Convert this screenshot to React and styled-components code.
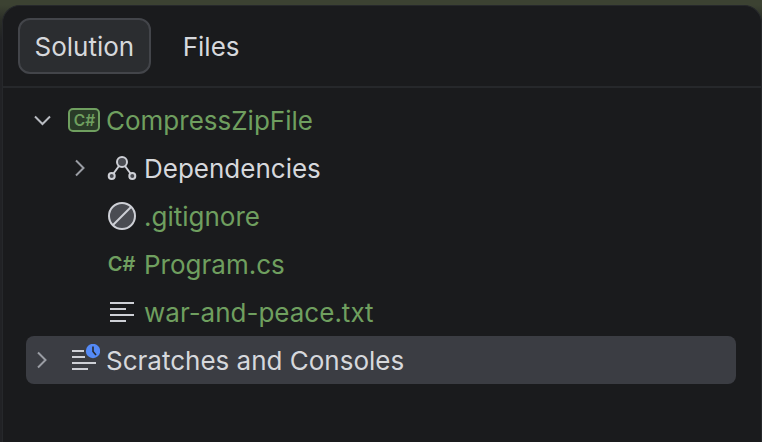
import React from "react";
import styled, { createGlobalStyle } from "styled-components";

const Global = createGlobalStyle`
  html, body { margin: 0; padding: 0; }
  body {
    width: 762px;
    height: 442px;
    overflow: hidden;
    font-family: Inter, "Liberation Sans", sans-serif;
    background: linear-gradient(#3c4232 0, #3c4232 5px, #2b2e28 20px, #212225 40px);
  }
`;

const Window = styled.div`
  box-sizing: border-box;
  width: 760px;
  height: 437px;
  margin: 5px 0 0 2px;
  background: #1a1b1d;
  border: 1px solid #26282b;
  border-bottom: none;
  border-radius: 18px 18px 0 0;
  display: flex;
  flex-direction: column;
`;

const TabBar = styled.div`
  display: flex;
  align-items: center;
  gap: 2px;
  height: 82px;
  box-sizing: border-box;
  padding: 12px 0 12px 15px;
  border-bottom: 2px solid #26282b;
`;

const Tab = styled.div`
  box-sizing: border-box;
  height: 56px;
  padding: 0 ${(p) => (p.$active ? "14.5px" : "28px")};
  display: flex;
  align-items: center;
  font-size: 26px;
  color: #d6d8dc;
  border-radius: 12px;
  background: ${(p) => (p.$active ? "#2b2d30" : "transparent")};
  border: 2px solid ${(p) => (p.$active ? "#43454a" : "transparent")};
`;

const Tree = styled.div`
  display: flex;
  flex-direction: column;
  padding: 8px 25px 0 23px;
`;

const Row = styled.div`
  height: 48px;
  display: flex;
  align-items: center;
  border-radius: 8px;
  padding-left: ${(p) => p.$indent}px;
  background: ${(p) => (p.$selected ? "#3b3d43" : "transparent")};
`;

const Arrow = styled.span`
  width: 32px;
  height: 28px;
  display: flex;
  align-items: center;
  justify-content: center;
  flex: none;
  margin-right: 10px;
`;

const IconBox = styled.span`
  width: 32px;
  height: 32px;
  display: flex;
  align-items: center;
  justify-content: center;
  flex: none;
  margin-right: 6px;
`;

const Label = styled.span`
  font-size: 26px;
  white-space: nowrap;
  color: ${(p) => (p.$green ? "#6f9f5f" : "#d6d8dc")};
`;

const CSharpGlyph = styled.text`
  font-family: Inter, "Liberation Sans", sans-serif;
  font-weight: 600;
  font-size: ${(p) => p.$size}px;
  fill: #6f9f5f;
`;

const ChevronDown = () => (
  <svg width="32" height="28" viewBox="0 0 32 28" fill="none" stroke="#b9bcc2" strokeWidth="2">
    <path d="M9 10.5 L16.5 18 L24 10.5" />
  </svg>
);
const ChevronRight = () => (
  <svg width="32" height="28" viewBox="0 0 32 28" fill="none" stroke="#9a9da4" strokeWidth="2">
    <path d="M12 6.5 L19.5 14 L12 21.5" />
  </svg>
);
const CSharpBox = () => (
  <svg width="32" height="32" viewBox="0 0 32 32" fill="none">
    <rect x="1" y="5" width="30" height="22" rx="4" fill="#2a3b28" stroke="#6f9f5f" strokeWidth="2" />
    <CSharpGlyph $size={15.5} x="16.5" y="21.7" textAnchor="middle">C#</CSharpGlyph>
  </svg>
);
const CSharpPlain = () => (
  <svg width="32" height="32" viewBox="0 0 32 32">
    <CSharpGlyph $size={20} x="15.5" y="22.8" textAnchor="middle">C#</CSharpGlyph>
  </svg>
);
const DepsIcon = () => (
  <svg width="32" height="32" viewBox="0 0 32 32" fill="none" stroke="#ced0d6" strokeWidth="2">
    <circle cx="16" cy="10" r="5" fill="#4a4c52" />
    <circle cx="5.7" cy="24" r="3" fill="#4a4c52" />
    <circle cx="26.3" cy="24" r="3" fill="#4a4c52" />
    <path d="M13 14 L7.5 21.5 M19 14 L24.5 21.5" />
  </svg>
);
const IgnoreIcon = () => (
  <svg width="32" height="32" viewBox="0 0 32 32" fill="none" stroke="#ced0d6" strokeWidth="2">
    <circle cx="16" cy="16" r="13" fill="#4a4c52" />
    <path d="M7 25 L25 7" />
  </svg>
);
const TextIcon = () => (
  <svg width="32" height="32" viewBox="0 0 32 32" fill="none" stroke="#ced0d6" strokeWidth="2">
    <path d="M4 7H28M4 13H20M4 19H28M4 25H20" />
  </svg>
);
const ScratchIcon = () => (
  <svg width="32" height="32" viewBox="0 0 32 32" fill="none">
    <path d="M4 7H16M4 13H17M4 19H28M4 25H20" stroke="#ced0d6" strokeWidth="2" />
    <circle cx="25" cy="7" r="7.2" fill="#548af7" />
    <path d="M25 2.5V7.5L28 11" stroke="#26282e" strokeWidth="1.6" />
  </svg>
);

export default function App() {
  return (
    <>
      <Global />
      <Window>
        <TabBar>
          <Tab $active>Solution</Tab>
          <Tab>Files</Tab>
        </TabBar>
        <Tree>
          <Row $indent={0}>
            <Arrow><ChevronDown /></Arrow>
            <IconBox><CSharpBox /></IconBox>
            <Label $green>CompressZipFile</Label>
          </Row>
          <Row $indent={38}>
            <Arrow><ChevronRight /></Arrow>
            <IconBox><DepsIcon /></IconBox>
            <Label>Dependencies</Label>
          </Row>
          <Row $indent={80}>
            <IconBox><IgnoreIcon /></IconBox>
            <Label $green>.gitignore</Label>
          </Row>
          <Row $indent={80}>
            <IconBox><CSharpPlain /></IconBox>
            <Label $green>Program.cs</Label>
          </Row>
          <Row $indent={80}>
            <IconBox><TextIcon /></IconBox>
            <Label $green>war-and-peace.txt</Label>
          </Row>
          <Row $selected $indent={0}>
            <Arrow><ChevronRight /></Arrow>
            <IconBox><ScratchIcon /></IconBox>
            <Label>Scratches and Consoles</Label>
          </Row>
        </Tree>
      </Window>
    </>
  );
}
